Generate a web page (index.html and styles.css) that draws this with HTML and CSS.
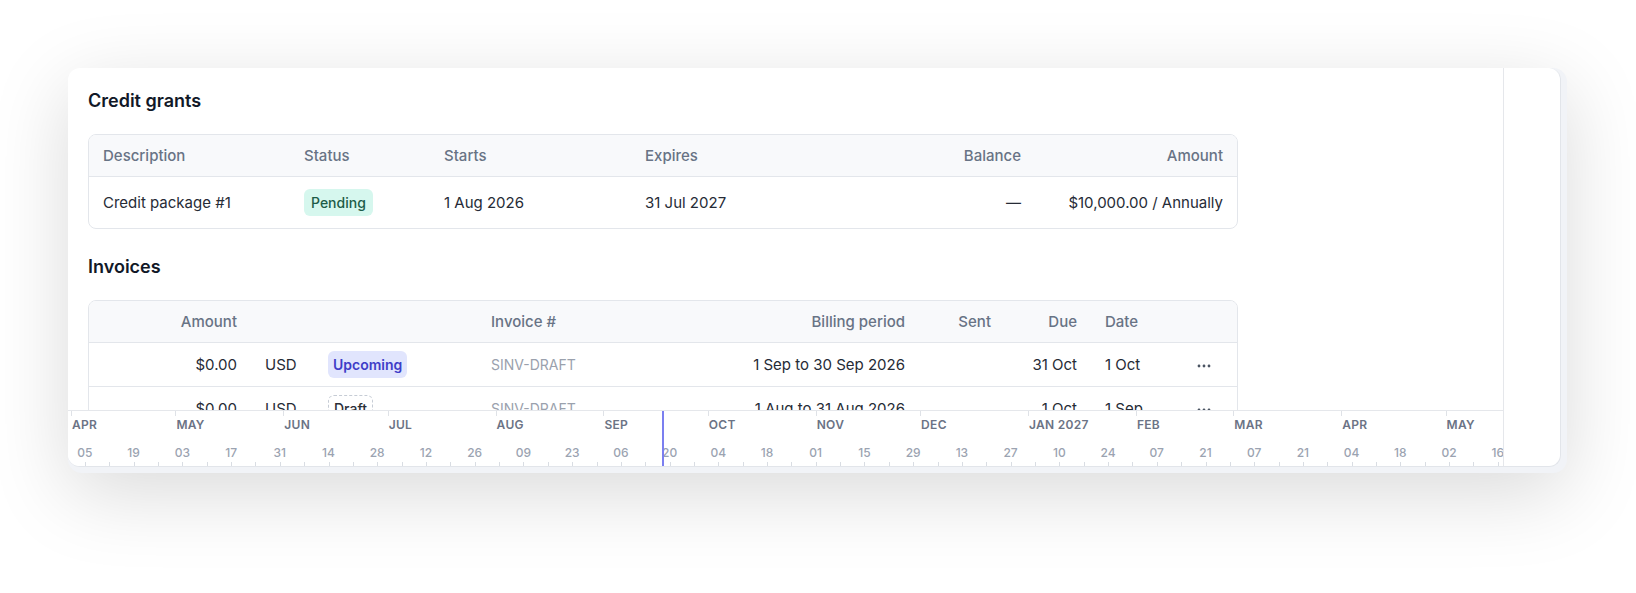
FILE: index.html
```html
<!DOCTYPE html>
<html lang="en">
<head>
    <meta charset="UTF-8">
    <meta name="viewport" content="width=device-width, initial-scale=1.0">
    <title>Customer - Billing</title>
    <link rel="stylesheet" href="styles.css">
</head>
<body>
    <div class="frame">
        <div class="panel">
            <div class="main">
                <h2 class="section-title">Credit grants</h2>
                <div class="data-table credit-table">
                    <div class="tr th">
                        <div class="cell">Description</div>
                        <div class="cell">Status</div>
                        <div class="cell">Starts</div>
                        <div class="cell">Expires</div>
                        <div class="cell right">Balance</div>
                        <div class="cell right">Amount</div>
                    </div>
                    <div class="tr credit-row">
                        <div class="cell">Credit package #1</div>
                        <div class="cell"><span class="badge badge-pending">Pending</span></div>
                        <div class="cell">1 Aug 2026</div>
                        <div class="cell">31 Jul 2027</div>
                        <div class="cell right">&mdash;</div>
                        <div class="cell right">$10,000.00 / Annually</div>
                    </div>
                </div>

                <h2 class="section-title invoices-title">Invoices</h2>
                <div class="data-table invoice-table">
                    <div class="tr th">
                        <div class="cell right">Amount</div>
                        <div class="cell"></div>
                        <div class="cell"></div>
                        <div class="cell">Invoice #</div>
                        <div class="cell right">Billing period</div>
                        <div class="cell right">Sent</div>
                        <div class="cell right">Due</div>
                        <div class="cell">Date</div>
                        <div class="cell"></div>
                    </div>
                    <div class="tr inv-row">
                        <div class="cell right">$0.00</div>
                        <div class="cell">USD</div>
                        <div class="cell"><span class="badge badge-upcoming">Upcoming</span></div>
                        <div class="cell muted">SINV-DRAFT</div>
                        <div class="cell right">1 Sep to 30 Sep 2026</div>
                        <div class="cell right"></div>
                        <div class="cell right">31 Oct</div>
                        <div class="cell">1 Oct</div>
                        <div class="cell center"><svg class="dots" width="14" height="4" viewBox="0 0 14 4"><circle cx="2" cy="2" r="1.4"/><circle cx="7" cy="2" r="1.4"/><circle cx="12" cy="2" r="1.4"/></svg></div>
                    </div>
                    <div class="tr inv-row">
                        <div class="cell right">$0.00</div>
                        <div class="cell">USD</div>
                        <div class="cell"><span class="badge badge-draft">Draft</span></div>
                        <div class="cell muted">SINV-DRAFT</div>
                        <div class="cell right">1 Aug to 31 Aug 2026</div>
                        <div class="cell right"></div>
                        <div class="cell right">1 Oct</div>
                        <div class="cell">1 Sep</div>
                        <div class="cell center"><svg class="dots" width="14" height="4" viewBox="0 0 14 4"><circle cx="2" cy="2" r="1.4"/><circle cx="7" cy="2" r="1.4"/><circle cx="12" cy="2" r="1.4"/></svg></div>
                    </div>
                </div>

                <!-- timeline ruler sits over the bottom of the content -->
                <div class="timeline" id="timeline"></div>
            </div>
            <div class="side"></div>
        </div>
    </div>

    <script>
        const MONTHS = ["JAN","FEB","MAR","APR","MAY","JUN","JUL","AUG","SEP","OCT","NOV","DEC"];
        const PX_PER_DAY = 3.48;
        const OFFSET = 3;
        const start = Date.UTC(2026, 3, 1); // 1 Apr 2026
        const DAY = 86400000;

        function xFor(y, m, d) {
            return OFFSET + (Date.UTC(y, m, d) - start) / DAY * PX_PER_DAY;
        }

        function buildTimeline() {
            const tl = document.getElementById("timeline");
            let html = "";

            // months
            for (let i = 0; i < 14; i++) {
                const y = 2026 + Math.floor((3 + i) / 12);
                const m = (3 + i) % 12;
                const x = xFor(y, m, 1);
                const label = (m === 0) ? `${MONTHS[m]} ${y}` : MONTHS[m];
                html += `<span class="m-tick" style="left:${x.toFixed(1)}px"></span>`;
                html += `<span class="m-label" style="left:${(x + 1).toFixed(1)}px">${label}</span>`;
            }

            // weeks, label every second one
            for (let k = 0; k < 62; k++) {
                const t = Date.UTC(2026, 3, 5) + k * 7 * DAY;
                const x = OFFSET + (t - start) / DAY * PX_PER_DAY;
                if (x > 1440) break;
                html += `<span class="w-tick" style="left:${x.toFixed(1)}px"></span>`;
                if (k % 2 === 0) {
                    const d = String(new Date(t).getUTCDate()).padStart(2, "0");
                    html += `<span class="d-label" style="left:${x.toFixed(1)}px">${d}</span>`;
                }
            }

            // today marker
            html += `<span class="today" style="left:${(xFor(2026, 8, 18) - 1).toFixed(1)}px"></span>`;
            tl.innerHTML = html;
        }

        buildTimeline();
    </script>
</body>
</html>
```

FILE: styles.css
```css
* {
  margin: 0;
  padding: 0;
  box-sizing: border-box;
}

body {
  background-color: #ffffff;
  font-family: Inter, "Noto Sans", Arial, sans-serif;
  color: #262b36;
  font-size: 15px;
  padding: 68px 0 0 68px;
  overflow: hidden;
  height: 100vh;
}

.frame {
  width: 1499px;
  height: 405px;
  background: #f1f3f7;
  border-radius: 14px;
  padding: 0 6px 6px 0;
  box-shadow: 0 20px 80px rgba(0, 0, 0, 0.15);
}

.panel {
  display: flex;
  height: 100%;
  background: #ffffff;
  border-radius: 12px;
  border-right: 1px solid #e2e5ea;
  border-bottom: 1px solid #e2e5ea;
  overflow: hidden;
}

.main {
  position: relative;
  width: 1436px;
  flex-shrink: 0;
  border-right: 1px solid #e5e7eb;
  padding: 21px 0 0 20px;
  overflow: hidden;
}

.side {
  flex: 1;
}

.section-title {
  font-size: 18px;
  line-height: 24px;
  font-weight: 600;
  color: #111827;
  margin-bottom: 21px;
}

.invoices-title {
  margin-top: 26px;
}

/* tables */
.data-table {
  width: 1150px;
  border: 1px solid #e3e6eb;
  border-radius: 8px;
  overflow: hidden;
}

.tr {
  display: grid;
  align-items: center;
}

.credit-table .tr {
  grid-template-columns: 201px 140px 201px 1fr 200px 202px;
}

.invoice-table .tr {
  grid-template-columns: 162px 63px 163px 223px 219px 86px 86px 79px 1fr;
}

.th {
  height: 42px;
  background: #f8f9fb;
  border-bottom: 1px solid #e3e6eb;
  color: #687385;
  font-weight: 500;
}

.credit-row {
  height: 51px;
}

.inv-row {
  height: 44px;
  border-bottom: 1px solid #e3e6eb;
}

.cell {
  padding: 0 14px;
  white-space: nowrap;
}

.cell.right {
  text-align: right;
}

.cell.center {
  text-align: center;
}

.muted {
  color: #9aa1ad;
  font-size: 14px;
}

.dots {
  fill: #4b5563;
  display: inline-block;
  vertical-align: middle;
}

/* badges */
.badge {
  display: inline-block;
  height: 27px;
  line-height: 27px;
  padding: 0 7px;
  border-radius: 6px;
  font-size: 14px;
  font-weight: 500;
}

.badge-pending {
  background: #d6f7ee;
  color: #1d5c48;
}

.badge-upcoming {
  background: #e1e5fd;
  color: #3f3dc8;
  font-weight: 600;
  padding: 0 5px;
}

.badge-draft {
  border: 1px dashed #c6ccd5;
  color: #2b2f38;
  line-height: 25px;
  padding: 0 5px;
}

/* timeline ruler */
.timeline {
  position: absolute;
  left: 0;
  right: 0;
  bottom: 0;
  height: 56px;
  background: #ffffff;
  border-top: 1px solid #e5e7eb;
  overflow: hidden;
}

.m-tick {
  position: absolute;
  top: 0;
  width: 1px;
  height: 5px;
  background: #dfe2e7;
}

.m-label {
  position: absolute;
  top: 6px;
  font-size: 12px;
  line-height: 16px;
  font-weight: 600;
  letter-spacing: 0.3px;
  color: #6b7385;
  white-space: nowrap;
}

.w-tick {
  position: absolute;
  bottom: 0;
  width: 1px;
  height: 4px;
  background: #d9dde3;
}

.d-label {
  position: absolute;
  top: 34px;
  font-size: 12px;
  line-height: 16px;
  font-weight: 500;
  color: #9ba3b1;
  transform: translateX(-50%);
}

.today {
  position: absolute;
  top: 0;
  bottom: 0;
  width: 2px;
  background: #7b7ff0;
}
```
